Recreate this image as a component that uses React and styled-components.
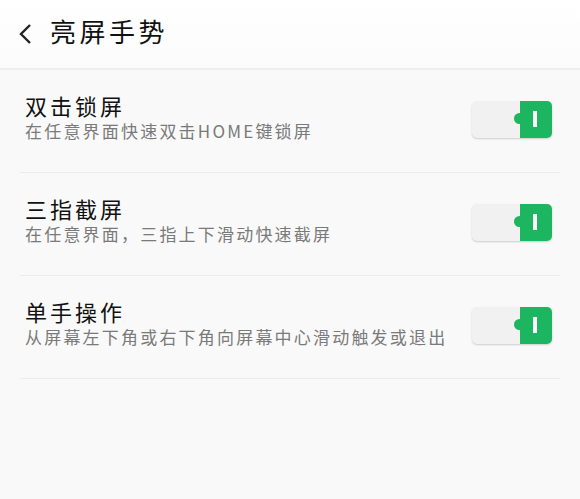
import React from "react";
import styled, { createGlobalStyle } from "styled-components";

const Global = createGlobalStyle`
  html, body { margin: 0; padding: 0; background: #f9f9f9; }
  body { font-family: "Noto Sans CJK SC", "Noto Sans", sans-serif; }
`;

const Page = styled.div`
  width: 580px;
  height: 499px;
  background: #f9f9f9;
  overflow: hidden;
`;

const Header = styled.header`
  height: 68px;
  display: flex;
  align-items: center;
  padding-left: 16px;
  gap: 14px;
  background: linear-gradient(#ffffff, #fbfbfb);
  border-bottom: 2px solid #eeeeee;
`;

const Back = styled.svg`
  width: 20px;
  height: 22px;
  flex: none;
`;

const Title = styled.h1`
  margin: 0;
  font-size: 26px;
  font-weight: 400;
  color: #111;
  letter-spacing: 3.5px;
  line-height: 1;
  margin-top: -6px;
`;

const List = styled.div`
  padding: 0 20px;
`;

const Row = styled.div`
  height: 103px;
  display: flex;
  align-items: center;
  justify-content: space-between;
  border-bottom: 1px solid #ececec;
  padding: 0 8px 0 5px;
  box-sizing: border-box;
`;

const Texts = styled.div`
  display: flex;
  flex-direction: column;
  margin-top: -10px;
`;

const Name = styled.div`
  font-size: 22px;
  color: #111;
  letter-spacing: 3px;
  line-height: 28px;
`;

const Desc = styled.div`
  font-size: 17px;
  color: #7a7a7a;
  letter-spacing: 2.2px;
  line-height: 23px;
`;

const Switch = styled.div`
  position: relative;
  width: 80px;
  height: 37px;
  border-radius: 5px;
  background: #f1f1f1;
  box-shadow: 0 1px 2px rgba(0, 0, 0, 0.18);
  flex: none;
  margin-top: -4px;
`;

const On = styled.div`
  position: absolute;
  right: 0;
  top: 0;
  bottom: 0;
  width: 32px;
  background: #1db660;
  border-radius: 0 5px 5px 0;
  display: flex;
  align-items: center;
  justify-content: center;
  &::before {
    content: "";
    position: absolute;
    left: -6px;
    top: 50%;
    width: 11px;
    height: 11px;
    margin-top: -6px;
    border-radius: 50%;
    background: #1db660;
  }
`;

const Bar = styled.div`
  width: 4px;
  height: 16px;
  background: #fff;
  margin-left: -2px;
`;

const items = [
  { name: "双击锁屏", desc: "在任意界面快速双击HOME键锁屏" },
  { name: "三指截屏", desc: "在任意界面，三指上下滑动快速截屏" },
  { name: "单手操作", desc: "从屏幕左下角或右下角向屏幕中心滑动触发或退出" },
];

export default function App() {
  return (
    <Page>
      <Global />
      <Header>
        <Back viewBox="0 0 20 22">
          <path d="M14 2 L5 11 L14 20" fill="none" stroke="#222" strokeWidth="2.4" />
        </Back>
        <Title>亮屏手势</Title>
      </Header>
      <List>
        {items.map((it) => (
          <Row key={it.name}>
            <Texts>
              <Name>{it.name}</Name>
              <Desc>{it.desc}</Desc>
            </Texts>
            <Switch>
              <On>
                <Bar />
              </On>
            </Switch>
          </Row>
        ))}
      </List>
    </Page>
  );
}
